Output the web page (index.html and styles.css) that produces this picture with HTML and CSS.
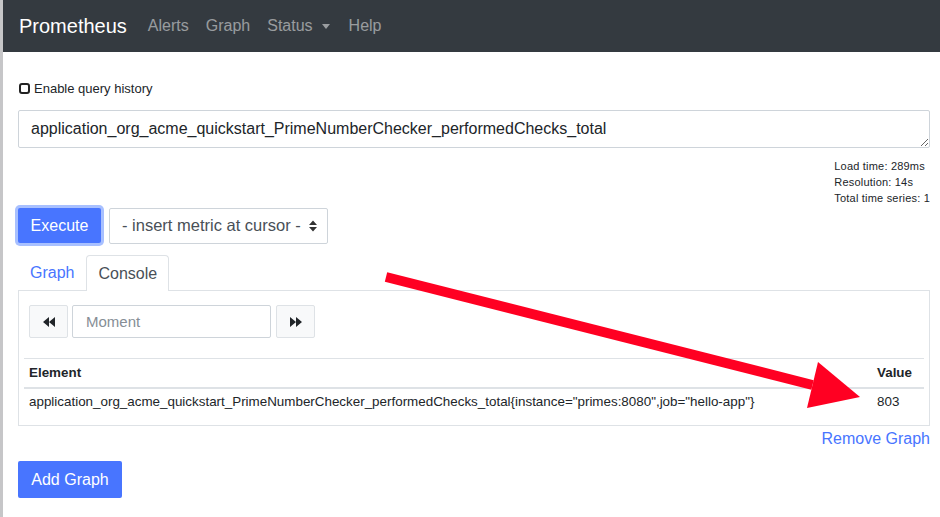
FILE: index.html
```html
<!DOCTYPE html>
<html>
<head>
<meta charset="utf-8">
<link rel="stylesheet" href="styles.css">
</head>
<body>
<div class="frame">
  <nav class="navbar">
    <span class="brand">Prometheus</span>
    <span class="nav-link">Alerts</span>
    <span class="nav-link">Graph</span>
    <span class="nav-link">Status <span class="caret"></span></span>
    <span class="nav-link">Help</span>
  </nav>
  <main class="content">
    <label class="history"><span class="checkbox"></span>Enable query history</label>
    <textarea class="query" spellcheck="false">application_org_acme_quickstart_PrimeNumberChecker_performedChecks_total</textarea>
    <div class="stats-row">
      <div class="stats">
        <div>Load time: 289ms</div>
        <div>Resolution: 14s</div>
        <div>Total time series: 1</div>
      </div>
    </div>
    <div class="exec-row">
      <button class="btn-primary execute">Execute</button>
      <div class="select">
        <span class="select-text">- insert metric at cursor -</span>
        <svg class="select-arrows" width="8" height="12" viewBox="0 0 8 12"><path d="M0 5 L4 0.5 L8 5 Z M0 7 L4 11.5 L8 7 Z" fill="#333"/></svg>
      </div>
    </div>
    <div class="tabs">
      <span class="tab">Graph</span>
      <span class="tab active">Console</span>
    </div>
    <div class="panel">
      <div class="controls">
        <button class="btn-light"><svg width="12" height="10" viewBox="0 0 12 10"><path d="M6 0 L0 5 L6 10 Z M12 0 L6 5 L12 10 Z" fill="#212529"/></svg></button>
        <div class="moment">Moment</div>
        <button class="btn-light"><svg width="12" height="10" viewBox="0 0 12 10"><path d="M0 0 L6 5 L0 10 Z M6 0 L12 5 L6 10 Z" fill="#212529"/></svg></button>
      </div>
      <table class="results">
        <thead>
          <tr><th>Element</th><th class="val">Value</th></tr>
        </thead>
        <tbody>
          <tr><td>application_org_acme_quickstart_PrimeNumberChecker_performedChecks_total{instance="primes:8080",job="hello-app"}</td><td class="val">803</td></tr>
        </tbody>
      </table>
    </div>
    <div class="remove-row"><span class="link">Remove Graph</span></div>
    <button class="btn-primary add">Add Graph</button>
  </main>
  <svg class="arrow" width="940" height="517" viewBox="0 0 940 517">
    <polygon points="387.2,272.2 384.8,281.8 811.3,389.8 813.7,380.2" fill="#ff0022"/>
    <polygon points="818,362 860,397 807,408" fill="#ff0022"/>
  </svg>
</div>
</body>
</html>
```
FILE: styles.css
```css
* { box-sizing: border-box; }
html, body { margin: 0; padding: 0; }
body {
  font-family: "Liberation Sans", Arial, sans-serif;
  color: #212529;
  background: #fff;
  width: 940px;
  height: 517px;
  overflow: hidden;
}
.frame {
  position: relative;
  border-left: 3px solid #c6c6c8;
  height: 517px;
}
.navbar {
  height: 52px;
  background: #343a40;
  display: flex;
  align-items: center;
  padding-left: 16px;
}
.brand {
  color: #fff;
  font-size: 20px;
  margin-right: 21px;
}
.nav-link {
  color: rgba(255,255,255,0.5);
  font-size: 16px;
  margin-right: 17px;
  display: flex;
  align-items: center;
}
.caret {
  display: inline-block;
  width: 0; height: 0;
  border-left: 4px solid transparent;
  border-right: 4px solid transparent;
  border-top: 5px solid rgba(255,255,255,0.5);
  margin-left: 9px;
  margin-right: 2px;
}
.content {
  padding: 0 10px 0 15px;
}
.history {
  display: flex;
  align-items: center;
  font-size: 13px;
  margin-top: 28px;
  height: 16px;
}
.checkbox {
  width: 11px;
  height: 11px;
  border: 2px solid #222;
  border-radius: 3px;
  margin-left: 1px;
  margin-right: 4px;
}
.query {
  display: block;
  width: 100%;
  height: 38px;
  margin-top: 14px;
  border: 1px solid #ced4da;
  border-radius: 2px;
  padding: 8px 12px;
  font-family: "Liberation Sans", Arial, sans-serif;
  font-size: 16px;
  line-height: 20px;
  color: #212529;
  resize: vertical;
  overflow: hidden;
}
.stats-row {
  display: flex;
  justify-content: flex-end;
  margin-top: 10px;
}
.stats {
  font-size: 11px;
  line-height: 16px;
  letter-spacing: 0.2px;
}
.exec-row {
  display: flex;
  align-items: center;
  margin-top: 0;
  gap: 8px;
}
.btn-primary {
  background: #4875ff;
  color: #fff;
  border: none;
  font-family: "Liberation Sans", Arial, sans-serif;
  font-size: 16px;
  border-radius: 2px;
}
.execute {
  width: 83px;
  height: 35px;
  margin: 2px 0 2px 0;
  box-shadow: 0 0 0 3px #a8c0ff;
}
.select {
  width: 219px;
  height: 36px;
  border: 1px solid #ced4da;
  border-radius: 2px;
  display: flex;
  align-items: center;
  padding: 0 10px 0 12px;
  font-size: 16.5px;
  color: #495057;
  overflow: hidden;
}
.select-text {
  flex: 1;
  white-space: nowrap;
  overflow: hidden;
}
.select-arrows { flex: none; margin-left: 4px; }
.tabs {
  display: flex;
  margin-top: 10px;
  height: 35px;
  align-items: stretch;
}
.tab {
  font-size: 16px;
  padding: 0 11px;
  display: flex;
  align-items: center;
  color: #4875ff;
  border: 1px solid transparent;
  border-bottom: none;
  border-radius: 4px 4px 0 0;
}
.tab.active {
  color: #495057;
  border-color: #dee2e6;
  background: #fff;
  margin-bottom: -1px;
  position: relative;
}
.panel {
  border: 1px solid #dee2e6;
  padding: 14px 5px 9px 5px;
}
.controls {
  display: flex;
  align-items: center;
  padding-left: 5px;
  gap: 4px;
}
.btn-light {
  width: 39px;
  height: 33px;
  background: #f8f9fa;
  border: 1px solid #dee2e6;
  border-radius: 2px;
  display: flex;
  align-items: center;
  justify-content: center;
  padding: 0;
}
.moment {
  width: 199px;
  height: 33px;
  border: 1px solid #ced4da;
  border-radius: 2px;
  font-size: 15px;
  color: #868e96;
  display: flex;
  align-items: center;
  padding-left: 13px;
  margin-right: 1px;
}
.results {
  width: 100%;
  border-collapse: collapse;
  margin-top: 20px;
  font-size: 13.4px;
}
.results th, .results td {
  text-align: left;
  padding: 6px 5px;
  line-height: 16px;
}
.results th {
  border-top: 1px solid #dee2e6;
  border-bottom: 2px solid #dee2e6;
  font-weight: bold;
}
.results td { padding-top: 5px; }
.results .val { width: 52px; }
.remove-row {
  text-align: right;
  margin-top: 3px;
  height: 20px;
  font-size: 16px;
  line-height: 20px;
}
.link { color: #4875ff; }
.add {
  margin-top: 12px;
  width: 104px;
  height: 37px;
}
.arrow {
  position: absolute;
  left: -3px;
  top: 0;
  pointer-events: none;
}
```
